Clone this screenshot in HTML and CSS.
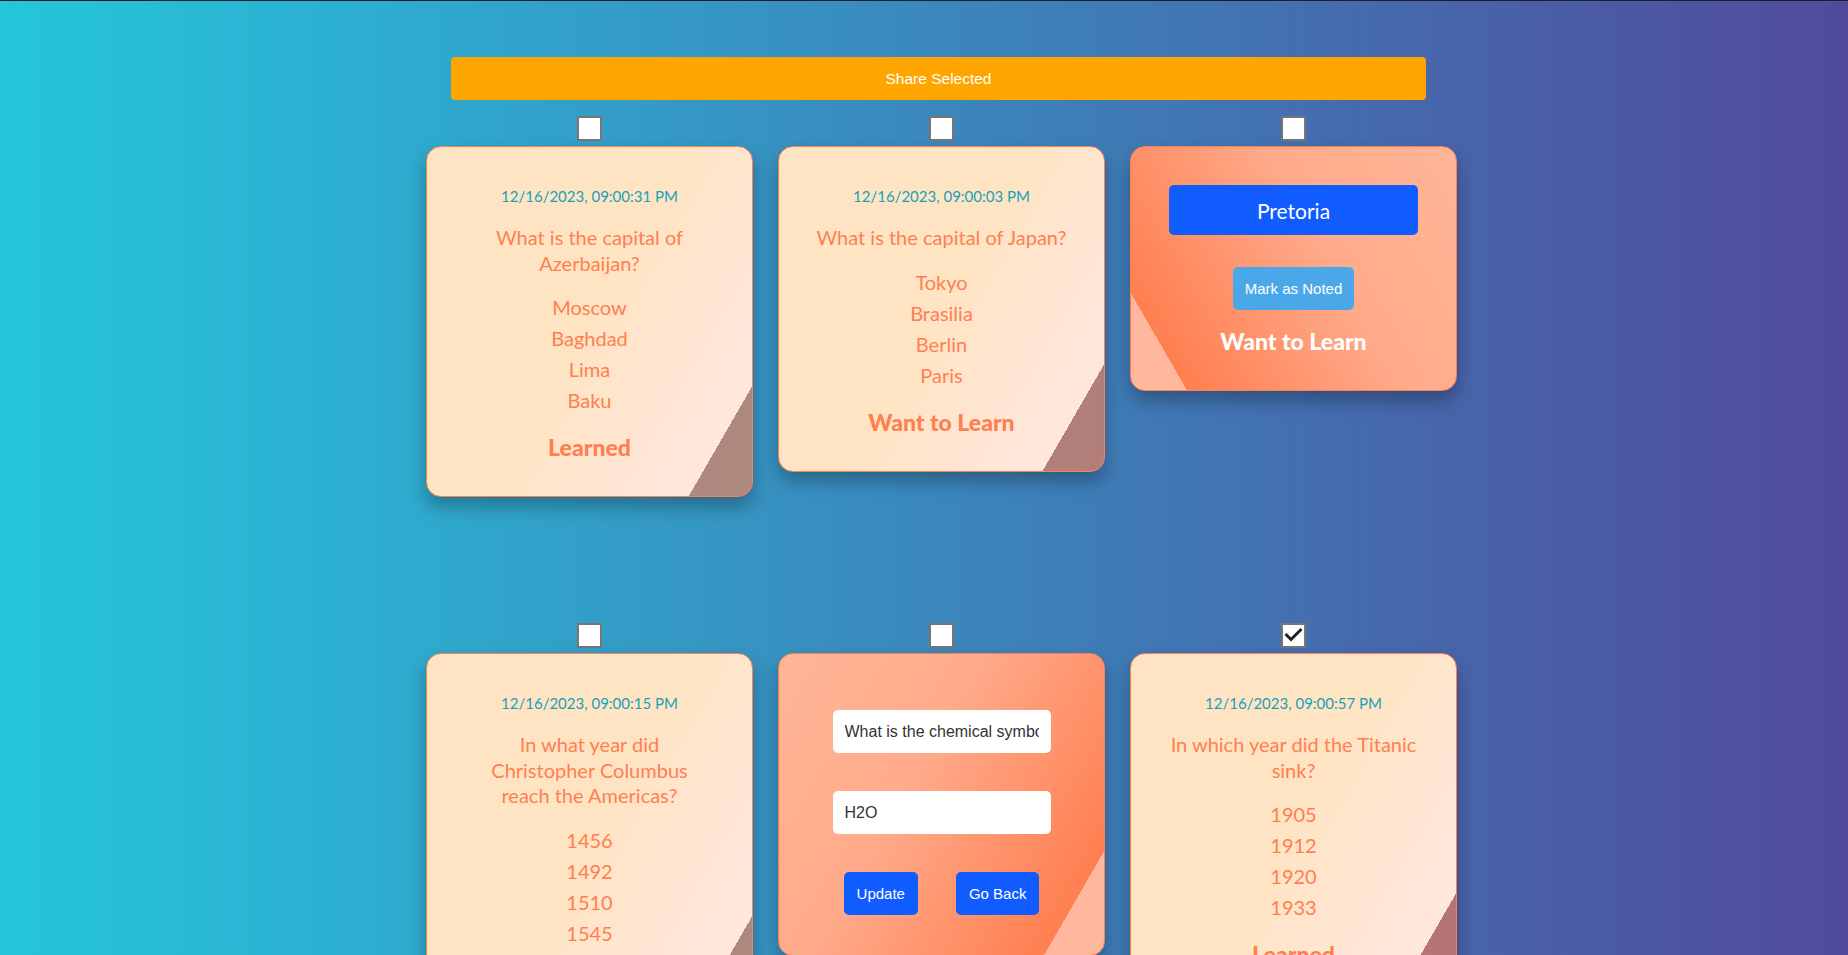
FILE: index.html
```html
<!DOCTYPE html>
<html lang="en">
<head>
<meta charset="utf-8">
<title>Flashcards</title>
<link rel="stylesheet" href="styles.css">
</head>
<body>
<main class="app">
  <button class="share-btn" type="button">Share Selected</button>
  <div class="grid">
    <div class="cell">
      <span class="checkbox"></span>
      <div class="card front">
        <p class="date">12/16/2023, 09:00:31 PM</p>
        <p class="question">What is the capital of Azerbaijan?</p>
        <ul class="options">
          <li>Moscow</li>
          <li>Baghdad</li>
          <li>Lima</li>
          <li>Baku</li>
        </ul>
        <p class="status">Learned</p>
      </div>
    </div>
    <div class="cell">
      <span class="checkbox"></span>
      <div class="card front">
        <p class="date">12/16/2023, 09:00:03 PM</p>
        <p class="question">What is the capital of Japan?</p>
        <ul class="options">
          <li>Tokyo</li>
          <li>Brasilia</li>
          <li>Berlin</li>
          <li>Paris</li>
        </ul>
        <p class="status">Want to Learn</p>
      </div>
    </div>
    <div class="cell">
      <span class="checkbox"></span>
      <div class="card back mirrored">
        <button class="answer-btn" type="button">Pretoria</button>
        <button class="note-btn" type="button">Mark as Noted</button>
        <p class="status">Want to Learn</p>
      </div>
    </div>
    <div class="cell">
      <span class="checkbox"></span>
      <div class="card front">
        <p class="date">12/16/2023, 09:00:15 PM</p>
        <p class="question">In what year did <span class="phrase">Christopher Columbus</span> <span class="phrase">reach the Americas?</span></p>
        <ul class="options">
          <li>1456</li>
          <li>1492</li>
          <li>1510</li>
          <li>1545</li>
        </ul>
        <p class="status">Learned</p>
      </div>
    </div>
    <div class="cell">
      <span class="checkbox"></span>
      <div class="card back edit">
        <input class="field" type="text" value="What is the chemical symbol for water?">
        <input class="field" type="text" value="H2O">
        <div class="edit-actions">
          <button class="action-btn" type="button">Update</button>
          <button class="action-btn" type="button">Go Back</button>
        </div>
      </div>
    </div>
    <div class="cell">
      <span class="checkbox checked">
        <svg viewBox="0 0 21 21" width="21" height="21" aria-hidden="true"><path d="M2.5 9 L8 14.5 L18.5 4" fill="none" stroke="#222" stroke-width="3"/></svg>
      </span>
      <div class="card front">
        <p class="date">12/16/2023, 09:00:57 PM</p>
        <p class="question">In which year did the Titanic sink?</p>
        <ul class="options">
          <li>1905</li>
          <li>1912</li>
          <li>1920</li>
          <li>1933</li>
        </ul>
        <p class="status">Learned</p>
      </div>
    </div>
  </div>
</main>
</body>
</html>
```

FILE: styles.css
```css
html {
  margin: 0;
}

body {
  margin: 0;
  min-height: 100vh;
  border-top: 1px solid #1f1f1f;
  padding-left: 35px;
  background: linear-gradient(90deg, #24c6dc 0%, #514a9d 100%);
  font-family: "Lato", "Open Sans", sans-serif;
}

.app {
  width: 1031px;
  margin: 0 auto;
  padding-top: 56px;
  padding-bottom: 60px;
}

.share-btn {
  display: block;
  width: 975px;
  height: 43px;
  margin: 0 0 0 25px;
  border: none;
  border-radius: 4px;
  background: #ffa500;
  color: #ffffff;
  font-family: "Liberation Sans", Arial, sans-serif;
  font-size: 15.5px;
}

.grid {
  display: grid;
  grid-template-columns: repeat(3, 327px);
  column-gap: 25px;
  row-gap: 126px;
  align-items: start;
  margin-top: 16px;
}

.cell {
  display: flex;
  flex-direction: column;
  align-items: center;
  gap: 5px;
}

.checkbox {
  box-sizing: border-box;
  width: 25px;
  height: 25px;
  border: 2px solid #767676;
  background: #ffffff;
  display: flex;
  align-items: center;
  justify-content: center;
}

.checkbox svg {
  display: block;
}

.card {
  box-sizing: border-box;
  width: 327px;
  border: 1px solid #ff7f50;
  border-radius: 15px;
  text-align: center;
  box-shadow: 0 10px 18px rgba(0, 0, 0, 0.28);
}

.front {
  padding: 36px 36px;
  background: linear-gradient(120deg, #ffe4c4 0%, #ffe4c4 50%, #ffe7de 88%, rgba(255, 127, 80, 0.6) 88%);
}

.back {
  background: linear-gradient(120deg, #ffb596 0%, #ffab8c 40%, #ff7f50 88%, #ffb89e 88%);
}

.back.mirrored {
  background: linear-gradient(240deg, #ffb596 0%, #ffab8c 40%, #ff7f50 88%, #ffb89e 88%);
  padding: 38px 38px 36px;
}

.date {
  margin: 0;
  font-size: 15px;
  line-height: 26px;
  color: #17a2b8;
}

.question {
  margin: 16px 0 0;
  font-size: 20px;
  line-height: 25.5px;
  color: #ff7f50;
}

.phrase {
  white-space: nowrap;
}

.options {
  list-style: none;
  margin: 16px 0 0;
  padding: 0;
}

.options li {
  font-size: 20px;
  line-height: 31px;
  color: #ff7f50;
}

.status {
  margin: 18px 0 0;
  font-size: 23px;
  line-height: 26px;
  font-weight: 900;
  color: #ff7f50;
}

.back .status {
  color: #ffffff;
}

.answer-btn {
  display: block;
  width: 100%;
  height: 50px;
  border: none;
  border-radius: 5px;
  background: #105cff;
  color: #ffffff;
  font-family: "Lato", "Open Sans", sans-serif;
  font-size: 21px;
}

.note-btn {
  display: block;
  margin: 32px auto 0;
  height: 43px;
  padding: 0 12px;
  border: none;
  border-radius: 5px;
  background: #4ba8e8;
  color: #ffffff;
  font-family: "Liberation Sans", Arial, sans-serif;
  font-size: 15px;
}

.edit {
  padding: 56px 40px 40px;
}

.field {
  box-sizing: border-box;
  display: block;
  width: 218px;
  height: 43px;
  margin: 0 auto;
  padding: 0 12px;
  border: none;
  border-radius: 5px;
  background: #ffffff;
  color: #333333;
  font-family: "Liberation Sans", Arial, sans-serif;
  font-size: 16px;
}

.field + .field {
  margin-top: 38px;
}

.edit-actions {
  display: flex;
  justify-content: center;
  gap: 38px;
  margin-top: 38px;
}

.action-btn {
  height: 43px;
  padding: 0 13px;
  border: none;
  border-radius: 5px;
  background: #105cff;
  color: #ffffff;
  font-family: "Liberation Sans", Arial, sans-serif;
  font-size: 15px;
}
```
